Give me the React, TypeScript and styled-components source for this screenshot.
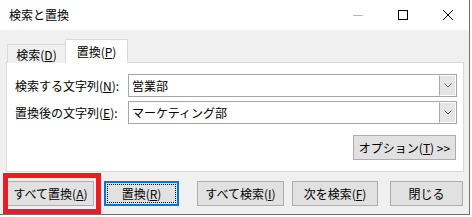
import styled, { createGlobalStyle } from "styled-components";
import { ReactElement } from "react";

const GlobalStyle = createGlobalStyle`
  html, body {
    margin: 0;
    padding: 0;
    background: #ffffff;
  }
  body {
    font-family: "Noto Sans CJK JP", "Noto Sans", sans-serif;
    font-size: 12px;
    color: #000000;
  }
`

const Window = styled.div`
  position: relative;
  width: 470px;
  height: 215px;
  box-sizing: border-box;
  background: #f0f0f0;
  border-right: 1px solid #707070;
  border-bottom: 1px solid #707070;
  display: flex;
  flex-direction: column;
`

const TitleBar = styled.div`
  height: 30px;
  background: #ffffff;
  display: flex;
  align-items: center;
  padding-left: 9px;
  flex-shrink: 0;
`

const Title = styled.div`
  flex: 1;
  line-height: 30px;
  padding-bottom: 1px;
`

const CaptionButton = styled.div<{ $width: number }>`
  width: ${p => p.$width}px;
  height: 30px;
  display: flex;
  align-items: center;
  justify-content: center;
`

const Body = styled.div`
  padding: 9px 0 0 6px;
  display: flex;
  flex-direction: column;
`

const TabRow = styled.div`
  height: 24px;
  display: flex;
  align-items: flex-end;
  padding-left: 1px;
  margin-bottom: -1px;
`

const Tab = styled.div<{ $active?: boolean }>`
  position: relative;
  box-sizing: border-box;
  display: flex;
  align-items: center;
  justify-content: center;
  border: 1px solid #d9d9d9;
  border-bottom: none;
  width: ${p => (p.$active ? 63 : 59)}px;
  height: ${p => (p.$active ? 24 : 19)}px;
  margin-left: ${p => (p.$active ? -1 : 0)}px;
  background: ${p => (p.$active ? "#ffffff" : "#f0f0f0")};
  z-index: ${p => (p.$active ? 1 : 0)};
  padding-top: ${p => (p.$active ? 0 : 1)}px;
`

const Panel = styled.div`
  width: 458px;
  height: 110px;
  box-sizing: border-box;
  background: #ffffff;
  border: 1px solid #d9d9d9;
  padding: 11px 6px 0 8px;
  display: flex;
  flex-direction: column;
  gap: 4px;
`

const FieldRow = styled.div`
  display: flex;
  align-items: center;
  height: 23px;
`

const Label = styled.div`
  width: 113px;
  white-space: nowrap;
`

const Combo = styled.div`
  width: 329px;
  height: 23px;
  box-sizing: border-box;
  border: 1px solid #a6a6a6;
  display: flex;
  align-items: stretch;
  background: #ffffff;
`

const ComboText = styled.div`
  flex: 1;
  padding-left: 3px;
  display: flex;
  align-items: center;
  white-space: nowrap;
`

const ComboArrow = styled.div`
  width: 17px;
  box-sizing: border-box;
  background: #e5e5e5;
  border: 1px solid #ffffff;
  border-left: 1px solid #a6a6a6;
  display: flex;
  align-items: center;
  justify-content: center;
`

const OptionRow = styled.div`
  display: flex;
  justify-content: flex-end;
  margin-top: 7px;
  padding-right: 1px;
`

const Button = styled.div<{ $width: number; $gap?: number; $focused?: boolean }>`
  position: relative;
  width: ${p => p.$width}px;
  height: 25px;
  margin-left: ${p => p.$gap ?? 0}px;
  box-sizing: border-box;
  background: #e1e1e1;
  border: ${p => (p.$focused ? "2px solid #0078d7" : "1px solid #adadad")};
  display: flex;
  align-items: center;
  justify-content: center;
  white-space: nowrap;
  padding-bottom: 1px;
`

const FocusRing = styled.div`
  position: absolute;
  inset: 1px;
  border: 1px dotted #000000;
`

const ButtonRow = styled.div`
  display: flex;
  margin-top: 9px;
  padding-left: 1px;
`

const Highlight = styled.div`
  position: absolute;
  left: 3px;
  top: 173px;
  width: 98px;
  height: 41px;
  box-sizing: border-box;
  border: 5px solid #ed1c24;
  pointer-events: none;
`

const Chevron = (): ReactElement => (
  <svg width="8" height="5" viewBox="0 0 8 5">
    <path d="M0.5 0.5 L4 4 L7.5 0.5" fill="none" stroke="#606060" strokeWidth="1" />
  </svg>
)

export const App = (): ReactElement => {
  return (
    <>
      <GlobalStyle />
      <Window>
        <TitleBar>
          <Title>検索と置換</Title>
          <CaptionButton $width={45}>
            <svg width="10" height="10" viewBox="0 0 10 10">
              <path d="M0 5.5 H10" stroke="#b8b8b8" strokeWidth="1" />
            </svg>
          </CaptionButton>
          <CaptionButton $width={46}>
            <svg width="10" height="10" viewBox="0 0 10 10">
              <rect x="0.5" y="0.5" width="9" height="9" fill="none" stroke="#000" strokeWidth="1" />
            </svg>
          </CaptionButton>
          <CaptionButton $width={43}>
            <svg width="10" height="10" viewBox="0 0 10 10">
              <path d="M0 0 L10 10 M10 0 L0 10" stroke="#000" strokeWidth="1" />
            </svg>
          </CaptionButton>
        </TitleBar>

        <Body>
          <TabRow>
            <Tab>検索(<u>D</u>)</Tab>
            <Tab $active>置換(<u>P</u>)</Tab>
          </TabRow>

          <Panel>
            <FieldRow>
              <Label>検索する文字列(<u>N</u>):</Label>
              <Combo>
                <ComboText>営業部</ComboText>
                <ComboArrow><Chevron /></ComboArrow>
              </Combo>
            </FieldRow>
            <FieldRow>
              <Label>置換後の文字列(<u>E</u>):</Label>
              <Combo>
                <ComboText>マーケティング部</ComboText>
                <ComboArrow><Chevron /></ComboArrow>
              </Combo>
            </FieldRow>
            <OptionRow>
              <Button $width={103}>オプション(<u>T</u>) &gt;&gt;</Button>
            </OptionRow>
          </Panel>

          <ButtonRow>
            <Button $width={87}>すべて置換(<u>A</u>)</Button>
            <Button $width={75} $gap={10} $focused>
              <FocusRing />
              置換(<u>R</u>)
            </Button>
            <Button $width={87} $gap={18}>すべて検索(<u>I</u>)</Button>
            <Button $width={86} $gap={8}>次を検索(<u>F</u>)</Button>
            <Button $width={73} $gap={12}>閉じる</Button>
          </ButtonRow>
        </Body>

        <Highlight />
      </Window>
    </>
  )
}

export default App
